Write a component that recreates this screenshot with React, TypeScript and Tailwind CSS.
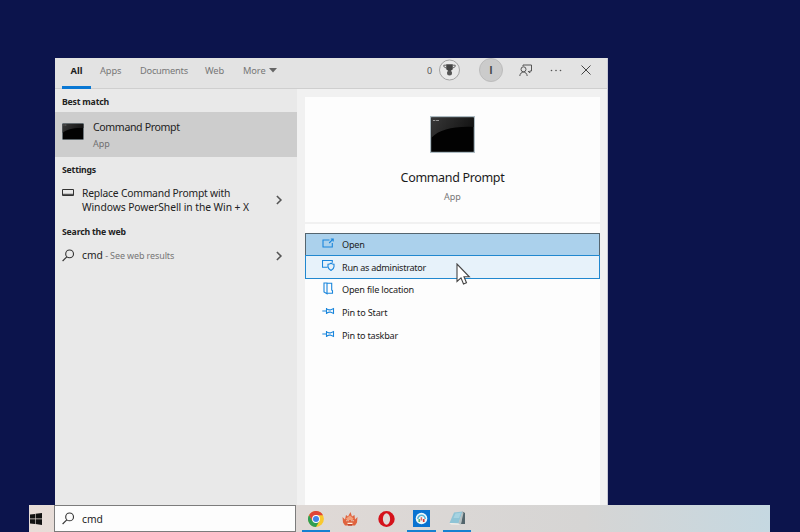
import React from 'react';

const stroke = { fill: 'none', stroke: '#1a86dc', strokeWidth: 1.1 };

function Terminal({ className }: { className: string }) {
  return (
    <svg viewBox="0 0 46 37" preserveAspectRatio="none" className={className}>
      <defs>
        <linearGradient id="gloss" x1="0" y1="0" x2="1" y2="0.3">
          <stop offset="0" stopColor="#383838" />
          <stop offset="1" stopColor="#141414" />
        </linearGradient>
      </defs>
      <rect width="46" height="37" fill="#aebcc3" />
      <rect x="1.2" y="1.5" width="43.5" height="34.3" fill="#020202" />
      <path d="M1.2 1.5H44.7V11C25 10 10 13 1.2 22Z" fill="url(#gloss)" />
      <path d="M3 4.5h2.5M6.2 4.5h3" stroke="#999" strokeWidth="1" />
    </svg>
  );
}

function Magnifier() {
  return (
    <svg width="14" height="14" viewBox="0 0 14 14" fill="none" stroke="#333" strokeWidth="1.1">
      <circle cx="7.6" cy="4.9" r="3.9" />
      <path d="M4.8 7.8.6 12" />
    </svg>
  );
}

function Chevron() {
  return (
    <svg width="8" height="10" viewBox="0 0 8 10" fill="none" stroke="#555" strokeWidth="1.6">
      <path d="M.9 1 4.9 5 .9 9" />
    </svg>
  );
}

function Header() {
  return (
    <div className="flex h-[31px] shrink-0 border-b border-[#cfcfcf] bg-[#e3e3e3] pl-[7px] text-[9.3px] leading-[25px] text-[#777]">
      <div className="flex h-[31px] w-[29px] justify-center border-b-[3px] border-[#0a78d4] font-bold text-[#1c1c1c]">All</div>
      <div className="ml-[9px] w-[40px] tracking-[-0.1px]">Apps</div>
      <div className="w-[65px] tracking-[-0.25px]">Documents</div>
      <div className="w-[38px] tracking-[-0.15px]">Web</div>
      <div className="w-[26px] tracking-[-0.1px]">More</div>
      <svg className="mt-[10px]" width="8" height="5" viewBox="0 0 8 5"><path d="M0 0h8L4 4.5Z" fill="#666" /></svg>
      <div className="ml-[150px] w-[12px] text-[9px] text-[#555]">0</div>
      <svg className="mt-[1px]" width="22" height="22" viewBox="0 0 22 22">
        <circle cx="10.5" cy="11" r="10" fill="#e9e9e9" stroke="#a4a4a4" />
        <path d="M7.2 5.3h6.6v5l-2.1 1.7h-2.4l-2.1-1.7Z" fill="#444" />
        <path d="M7.2 6.2H4.8v1.4l2.4 1.5M13.8 6.2h2.4v1.4l-2.4 1.5" fill="none" stroke="#666" />
        <circle cx="10.5" cy="14" r="2.5" fill="#555" />
      </svg>
      <div className="ml-[18px] flex h-[24px] w-[24px] items-center justify-center rounded-full border border-[#bcbcbc] bg-[#cbcbcb] font-['Liberation_Sans',sans-serif] text-[10.5px] font-bold text-[#444]">I</div>
      <svg className="ml-[16px] mt-[6px]" width="14" height="13" viewBox="0 0 14 13" fill="none" stroke="#555" strokeWidth="1">
        <circle cx="4.5" cy="5.3" r="2.5" />
        <path d="M.8 12c.4-5.2 7-5.2 7.4 0M4 2.2V1h8.5v6h-1.7v2L9 7" />
      </svg>
      <svg className="ml-[17px] mt-[11px]" width="12" height="3" viewBox="0 0 12 3" fill="#555">
        <circle cx="1.5" cy="1.5" r=".8" /><circle cx="6" cy="1.5" r=".8" /><circle cx="10.5" cy="1.5" r=".8" />
      </svg>
      <svg className="ml-[18px] mt-[7px]" width="12" height="10" viewBox="0 0 12 10" fill="none" stroke="#444" strokeWidth="1">
        <path d="M1.5.5l9 9M10.5.5l-9 9" />
      </svg>
    </div>
  );
}

function Results() {
  return (
    <div className="flex w-[242px] shrink-0 flex-col bg-[#e9e9e9] text-[#222]">
      <div className="h-[23px] pl-[7px] text-[8.7px] font-bold leading-[26px] tracking-[-0.2px]">Best match</div>
      <div className="flex h-[45px] bg-[#cdcdcd] pl-[7px]">
        <Terminal className="mt-[11px] h-[17px] w-[22px]" />
        <div className="ml-[9px] pt-[6px]">
          <div className="text-[10.6px] leading-[18px] tracking-[-0.38px]">Command Prompt</div>
          <div className="text-[9px] leading-[16px] text-[#707070]">App</div>
        </div>
      </div>
      <div className="h-[29px] pl-[7px] text-[8.7px] font-bold leading-[26px] tracking-[-0.2px]">Settings</div>
      <div className="flex h-[35px] pl-[7px]">
        <svg className="mt-[3px]" width="12" height="8" viewBox="0 0 12 8" fill="none" stroke="#333" strokeWidth="1">
          <path d="M.5.5h11v6H.5ZM.5 5.3h11" />
        </svg>
        <div className="ml-[8px] w-[194px] whitespace-nowrap text-[10.3px] leading-[14px]">
          <div className="tracking-[-0.19px]">Replace Command Prompt with</div>
          <div className="tracking-[-0.06px]">Windows PowerShell in the Win + X</div>
        </div>
        <div className="mt-[9px]"><Chevron /></div>
      </div>
      <div className="h-[24px] pl-[7px] text-[8.7px] font-bold leading-[22px] tracking-[-0.18px]">Search the web</div>
      <div className="flex h-[24px] items-center pb-[3px] pl-[7px]">
        <Magnifier />
        <div className="ml-[6px] w-[194px] text-[10.3px]">cmd<span className="text-[9px] tracking-[-0.12px] text-[#777]"> - See web results</span></div>
        <Chevron />
      </div>
    </div>
  );
}

function ActionIcon({ kind }: { kind: string }) {
  return (
    <svg width="13" height="13" viewBox="0 0 13 13" {...stroke}>
      {kind === 'open' && <path d="M7.5 3H1v7h9.3V6M7.2 6 11 2.2M8.8 2h2.4v2.4" />}
      {kind === 'admin' && <path d="M5.5 8.3h-5V1.5h9.8v2.2M9 4.3c1 .8 2 1 3 1v2.5c0 1.7-1.5 2.8-3 3.6-1.5-.8-3-1.9-3-3.6V5.3c1 0 2-.2 3-1Z" />}
      {kind === 'file' && <path d="M2 1h3v10.7L2 10ZM5 1.3h4.7V8l.8.8v2.5H5" />}
      {kind === 'pin' && <path d="M.3 6H4.2M4.5 3v6M4.5 4c1.500 0 1.500.9 2.500.9h1.500L11.500 3.500v5L8.500 7.100H7c-1 0-1 .9-2.500.9" />}
    </svg>
  );
}

function Action({ kind, label, box, text }: { kind: string; label: string; box: string; text: string }) {
  return (
    <div className={`flex items-center pl-[16px] ${box}`}>
      <div className="-mt-[3px] w-[20px]"><ActionIcon kind={kind} /></div>
      <div className={`whitespace-nowrap text-[9.1px] text-[#222] ${text}`}>{label}</div>
    </div>
  );
}

function Details() {
  return (
    <div className="flex grow flex-col bg-[#f1f1f1] pl-[8px] pr-[7px] pt-[8px]">
      <div className="flex h-[125px] shrink-0 flex-col items-center bg-[#fdfdfd] pt-[19px]">
        <Terminal className="h-[37px] w-[45px]" />
        <div className="mt-[15px] text-[12.5px] leading-[20px] tracking-[-0.33px] text-[#1b1b1b]">Command Prompt</div>
        <div className="mt-[2px] text-[9px] leading-[14px] text-[#777]">App</div>
      </div>
      <div className="relative mt-[2px] flex grow flex-col bg-[#fdfdfd] pt-[9px]">
        <Action kind="open" label="Open" box="h-[22px] border border-b-0 border-[#54656f] bg-[#abd1ec]" text="tracking-[-0.2px]" />
        <Action kind="admin" label="Run as administrator" box="h-[24px] border border-[#2188cf] bg-[#e7f2fa]" text="pt-[2px] tracking-[-0.27px]" />
        <Action kind="file" label="Open file location" box="h-[22px] border-x border-transparent" text="tracking-[-0.18px]" />
        <Action kind="pin" label="Pin to Start" box="h-[23px] border-x border-transparent" text="tracking-[-0.18px]" />
        <Action kind="pin" label="Pin to taskbar" box="h-[23px] border-x border-transparent" text="tracking-[-0.22px]" />
        <svg className="absolute left-[151px] top-[39px]" width="15" height="23" viewBox="0 0 15 23">
          <path d="M1 1v17.5l4-3.6L7.5 21l3-1.3L8 13.800h5.300Z" fill="#fff" stroke="#444" strokeWidth="1.1" />
        </svg>
      </div>
    </div>
  );
}

function Taskbar() {
  return (
    <div className="ml-[29px] flex h-[27px] w-[741px] bg-linear-to-r from-[#e8ddd8] via-[#d6d5d4] via-75% to-[#c5d8e1]">
      <div className="w-[25px] pl-[1px] pt-[8px]">
        <svg width="12" height="12" viewBox="0 0 12 12" fill="#111">
          <path d="M0 1.6 5 .9v4.7H0ZM5.6.8 12 0v5.6H5.6ZM0 6.2h5v4.9l-5-.7ZM5.6 6.2H12V12l-6.400-.9Z" />
        </svg>
      </div>
      <div className="flex w-[242px] items-center border border-[#7c7c7c] bg-[#fdfdfd] pl-[7px]">
        <Magnifier />
        <div className="ml-[6px] pt-[2px] text-[10.3px] text-[#222]">cmd</div>
      </div>
      <div className="ml-[6px] flex w-[28px] justify-center border-b-2 border-[#1681d1] pt-[6px]">
        <svg width="16" height="16" viewBox="0 0 16 16">
          <circle cx="8" cy="8" r="7.9" fill="#f9c92f" />
          <path d="M8 15.9 11.4 10H4.600L1.100 4A7.900 7.900 0 0 0 8 15.900Z" fill="#2f9e53" />
          <path d="M1.100 4 4.500 10 8 4.200h7A7.900 7.900 0 0 0 1.100 4Z" fill="#df4536" />
          <circle cx="8" cy="8" r="3.900" fill="#fff" />
          <circle cx="8" cy="8" r="3" fill="#4084ea" />
        </svg>
      </div>
      <svg className="ml-[12px] mt-[6px]" width="16" height="16" viewBox="0 0 16 16">
        <path d="m.5 6 2.500 2.500L4 4l2 1.500L8.500 1 10 5.500 12.500 4l.5 4.500L15.500 6l-.5 5.500-2 3H3l-2-3Z" fill="#e0643f" />
        <path d="m4 7.500 4-3 3.500 3L10.500 9H5Z" fill="#f2a17c" />
        <path d="M4.500 9.700h2.200M9.300 9.700h2.200M5.500 12.300h5" stroke="#fff0df" strokeWidth="1.3" />
        <path d="M5.800 9.400v1M10.200 9.400v1M6 14h4" stroke="#a52d1d" strokeWidth="1" />
      </svg>
      <svg className="ml-[20px] mt-[6px]" width="17" height="16" viewBox="0 0 17 16">
        <ellipse cx="8.500" cy="8" rx="8.200" ry="7.900" fill="#d5121b" />
        <ellipse cx="8.500" cy="8" rx="3.600" ry="5.800" fill="#dedad8" />
      </svg>
      <div className="ml-[12px] flex w-[29px] justify-center border-b-2 border-[#1681d1] pt-[5px]">
        <svg width="17" height="17" viewBox="0 0 17 17">
          <rect width="17" height="17" fill="#0873d1" />
          <circle cx="8.500" cy="8.500" r="5.800" fill="#eff8fb" />
          <path d="M4.800 9a3.700 3.700 0 0 1 7.400 0" fill="none" stroke="#59b5d8" strokeWidth="1.500" />
          <path d="M6.300 9v3" stroke="#5cb06f" strokeWidth="1.700" />
          <path d="M8.400 7.200v3.300" stroke="#e16b62" strokeWidth="1.500" />
          <path d="M10.700 9v3" stroke="#d83931" strokeWidth="1.700" />
        </svg>
      </div>
      <div className="ml-[7px] flex w-[28px] justify-center border-b-2 border-[#1681d1] pt-[5px]">
        <svg width="17" height="17" viewBox="0 0 17 17">
          <path d="M13.500 1.500 16 3v11h-4Z" fill="#53656c" />
          <path d="M5 2.500 13.500 1.500 9.500 13.500.5 13Z" fill="#8fc4d6" />
          <path d="M6.500 3.500 12 2.800 10 8 4.500 8Z" fill="#a6d3e1" />
          <path d="m.5 13 9 .5L11 14.700 2 14.500Z" fill="#f1f0ea" />
          <path d="M13.500 1.500 14.500 3 11.800 14.500 9.500 13.500Z" fill="#b5c0c2" />
        </svg>
      </div>
    </div>
  );
}

export default function App() {
  return (
    <div className="flex h-[532px] w-[800px] flex-col overflow-hidden bg-[#0c144c] pt-[58px] font-['Noto_Sans','Open_Sans',sans-serif]">
      <div className="ml-[55px] flex h-[447px] w-[553px] shrink-0 flex-col border-r border-[#c9c9d5]">
        <Header />
        <div className="flex grow">
          <Results />
          <Details />
        </div>
      </div>
      <Taskbar />
    </div>
  );
}
